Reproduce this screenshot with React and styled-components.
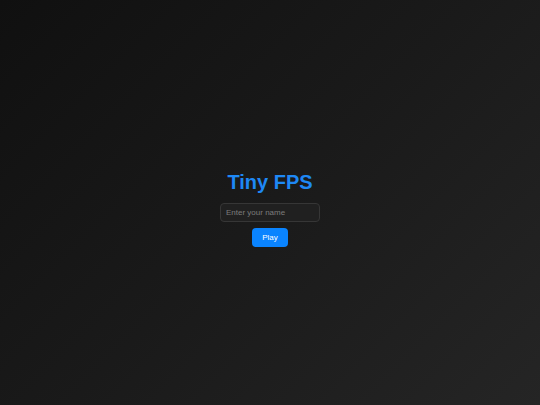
import styled, { createGlobalStyle } from 'styled-components';

const GlobalStyle = createGlobalStyle`
  html, body {
    margin: 0;
    padding: 0;
    height: 100%;
  }
  body {
    font-family: 'Liberation Sans', Arial, sans-serif;
    background: #111;
  }
  #root {
    height: 100%;
  }
`;

const Screen = styled.div`
  min-height: 100vh;
  box-sizing: border-box;
  padding-top: 13px;
  display: flex;
  flex-direction: column;
  align-items: center;
  justify-content: center;
  background: linear-gradient(135deg, #101010 0%, #1a1a1a 50%, #252525 100%);
`;

const Title = styled.h1`
  margin: 0 0 9px;
  font-size: 20px;
  font-weight: bold;
  color: #1e88f5;
`;

const NameInput = styled.input`
  width: 100px;
  height: 19px;
  box-sizing: border-box;
  padding: 0 5px;
  font-family: inherit;
  font-size: 8px;
  color: #ddd;
  background: #202020;
  border: 1px solid #363636;
  border-radius: 4px;
  outline: none;

  &::placeholder {
    color: #7c7c7c;
  }
`;

const PlayButton = styled.button`
  margin-top: 6px;
  height: 19px;
  padding: 0 10px;
  font-family: inherit;
  font-size: 8px;
  color: #fff;
  background: #0a84ff;
  border: none;
  border-radius: 4px;
  cursor: pointer;
`;

export default function App() {
  return (
    <>
      <GlobalStyle />
      <Screen>
        <Title>Tiny FPS</Title>
        <NameInput placeholder="Enter your name" />
        <PlayButton>Play</PlayButton>
      </Screen>
    </>
  );
}
